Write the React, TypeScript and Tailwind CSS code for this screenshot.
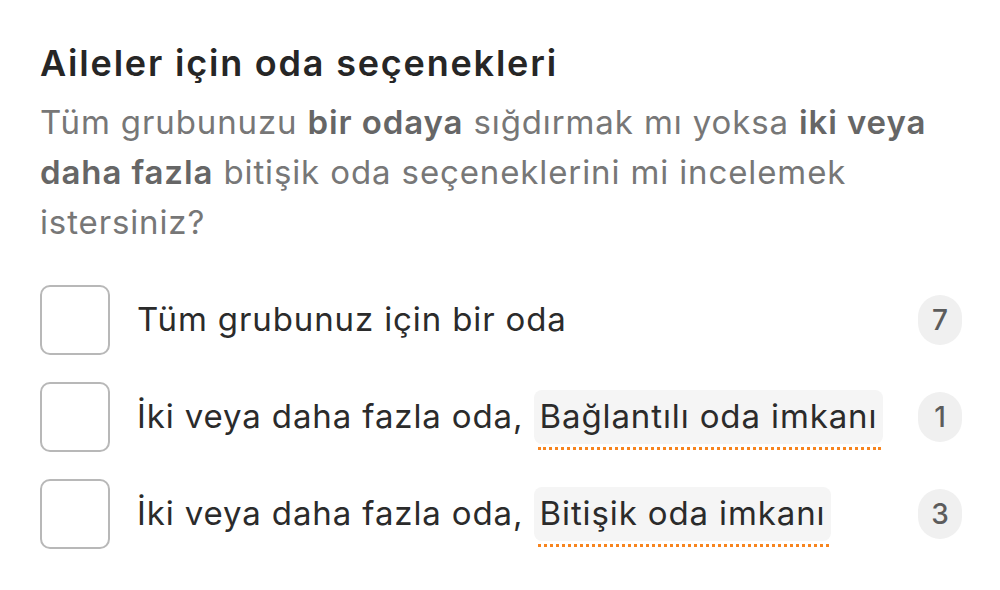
import React from "react";

function Badge({ n }: { n: number }) {
  return (
    <div className="flex h-[50px] w-[44px] shrink-0 items-center justify-center rounded-full bg-[#f0f0f0] text-[28px] font-medium tracking-normal text-[#5c5c5c]">
      {n}
    </div>
  );
}

function Box() {
  return <div className="h-[70px] w-[70px] shrink-0 rounded-[10px] border-2 border-[#b8b8b8] bg-white" />;
}

function Hl({ children }: { children: React.ReactNode }) {
  return (
    <span className="relative inline-block">
      <span className="inline-block rounded-[8px] bg-[#f5f5f5] px-[6px] py-[2px]">{children}</span>
      <span className="absolute left-[4px] right-[2px] bottom-[-6px] h-0 border-t-[3px] border-dotted border-[#f7841e]" />
    </span>
  );
}

export default function App() {
  return (
    <div className="h-[590px] w-[1000px] bg-white pl-10 pr-[38px] pt-[41px] font-['Inter','Roboto',sans-serif] tracking-[0.055em]">
      <h2 className="text-[36px] font-semibold leading-[44px] tracking-[0.05em] text-[#262626]">Aileler için oda seçenekleri</h2>
      <p className="mt-[12px] text-[33px] leading-[50px] text-[#777777]">
        Tüm grubunuzu <b className="font-semibold text-[#666666]">bir odaya</b> sığdırmak mı yoksa{" "}
        <b className="font-semibold text-[#666666]">iki veya daha fazla</b> bitişik oda seçeneklerini mi incelemek istersiniz?
      </p>
      <div className="mt-[38px] flex flex-col gap-[27px] text-[33px] text-[#2b2b2b]">
        <div className="flex h-[70px] items-center">
          <Box />
          <div className="ml-[27px] flex-1">Tüm grubunuz için bir oda</div>
          <Badge n={7} />
        </div>
        <div className="flex h-[70px] items-center">
          <Box />
          <div className="ml-[27px] flex-1">
            İki veya daha fazla oda, <Hl>Bağlantılı oda imkanı</Hl>
          </div>
          <Badge n={1} />
        </div>
        <div className="flex h-[70px] items-center">
          <Box />
          <div className="ml-[27px] flex-1">
            İki veya daha fazla oda, <Hl>Bitişik oda imkanı</Hl>
          </div>
          <Badge n={3} />
        </div>
      </div>
    </div>
  );
}
